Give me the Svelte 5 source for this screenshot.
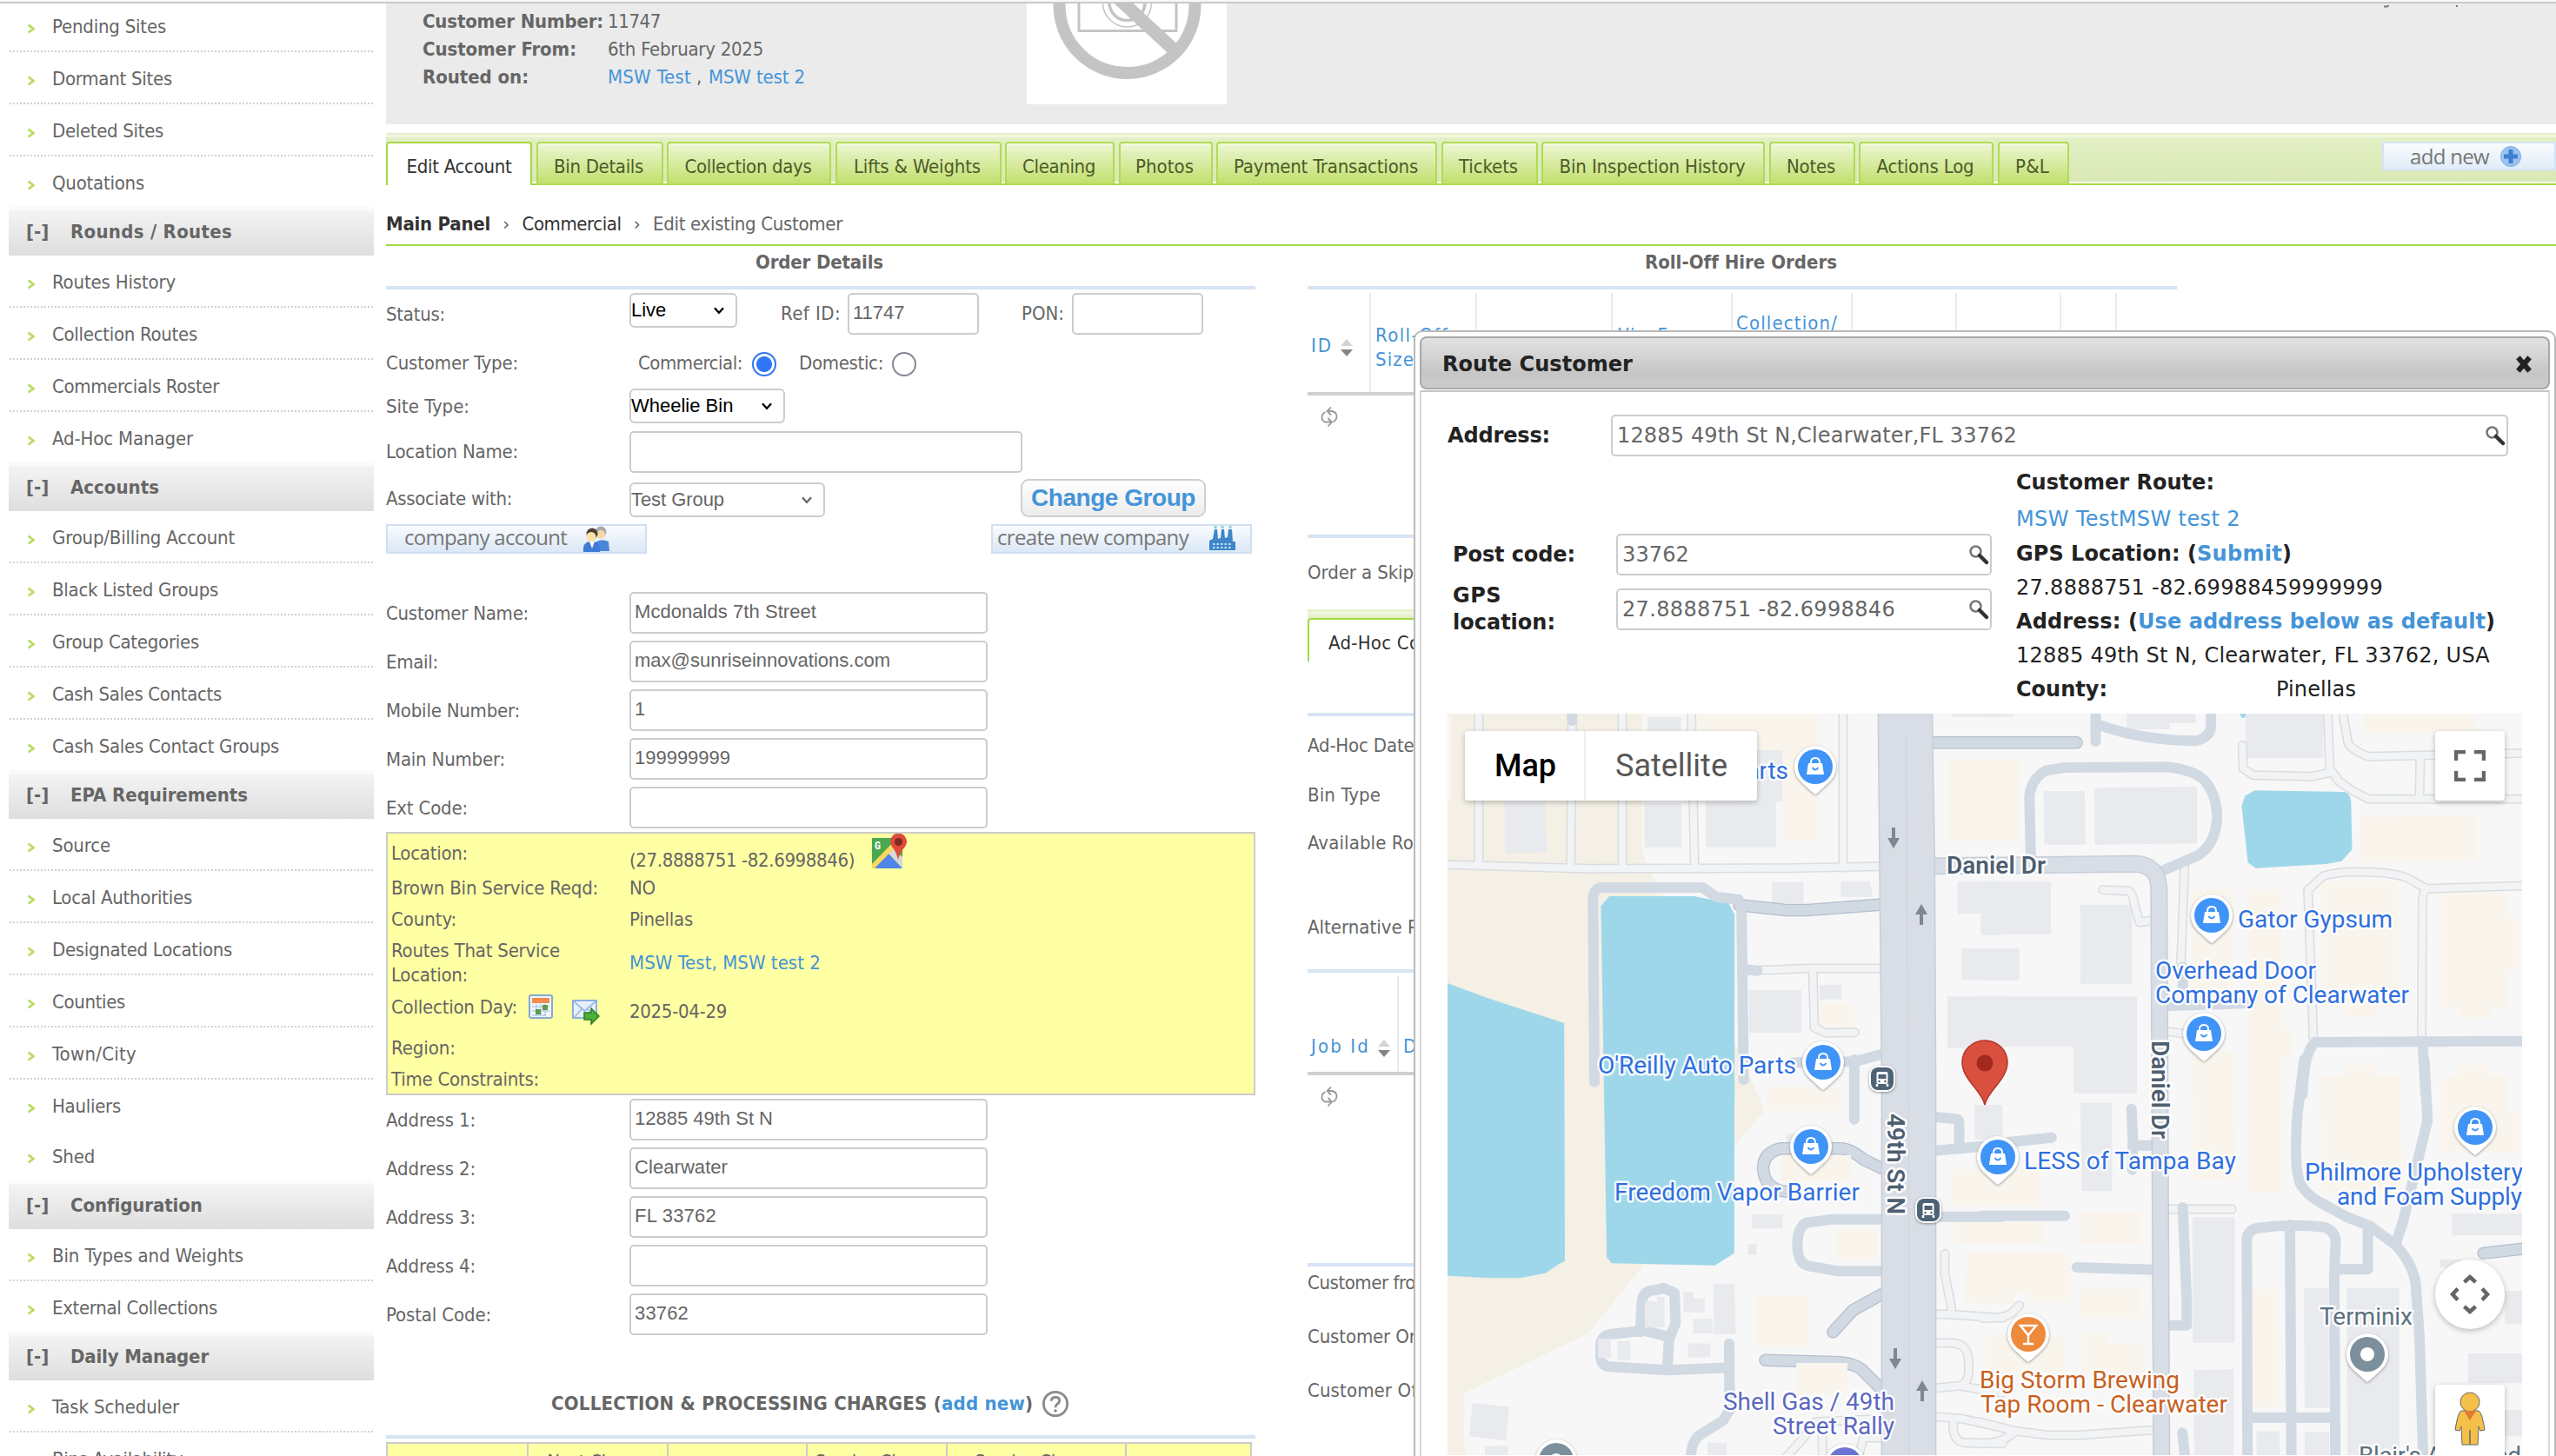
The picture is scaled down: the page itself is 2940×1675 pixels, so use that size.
<script>
  // Tracks a label out (or in) so that it occupies the given width.
  function fit(node, width) {
    if (!width) return;
    const natural = node.getBoundingClientRect().width;
    const n = node.textContent.length;
    node.style.letterSpacing = `${(width - natural) / n}px`;
  }

  const menu = [
    { title: null, items: [['Pending Sites', 131], ['Dormant Sites', 138], ['Deleted Sites', 128], ['Quotations', 106]] },
    { title: ['Rounds / Routes', 186], items: [['Routes History', 142], ['Collection Routes', 167], ['Commercials Roster', 192], ['Ad-Hoc Manager', 162]] },
    { title: ['Accounts', 102], items: [['Group/Billing Account', 210], ['Black Listed Groups', 191], ['Group Categories', 169], ['Cash Sales Contacts', 195], ['Cash Sales Contact Groups', 261]] },
    { title: ['EPA Requirements', 204], items: [['Source', 67], ['Local Authorities', 161], ['Designated Locations', 207], ['Counties', 84], ['Town/City', 97], ['Hauliers', 79, true], ['Shed', 49]] },
    { title: ['Configuration', 151], items: [['Bin Types and Weights', 220], ['External Collections', 190]] },
    { title: ['Daily Manager', 159], items: [['Task Scheduler', 146], ['Bins Availability', 150]] }
  ];

  const tabs = [
    ['Edit Account', 121], ['Bin Details', 103], ['Collection days', 146], ['Lifts & Weights', 146],
    ['Cleaning', 84], ['Photos', 67], ['Payment Transactions', 212], ['Tickets', 68],
    ['Bin Inspection History', 214], ['Notes', 56], ['Actions Log', 112], ['P&L', 39]
  ];

  const contact = [
    ['Customer Name:', 164, 'Mcdonalds 7th Street', 209], ['Email:', 60, 'max@sunriseinnovations.com', 294],
    ['Mobile Number:', 154, '1', 0], ['Main Number:', 137, '199999999', 110], ['Ext Code:', 94, '', 0]
  ];
  const address = [
    ['Address 1:', 103, '12885 49th St N', 159], ['Address 2:', 103, 'Clearwater', 107],
    ['Address 3:', 103, 'FL 33762', 94], ['Address 4:', 103, '', 0], ['Postal Code:', 121, '33762', 62]
  ];

  // Map geometry. Left and right halves have their own coordinate scale; each is split in an upper and a lower part.
  const quads = [
    {
      t: 'translate(1640 810) scale(.41454 .33333)',
      sand: ['M60 36H600V515L630 600L660 665L860 1180L940 1405L856 1530V1900L800 1938H605L450 2175L105 2382V2550L118 2620H60Z'],
      cream: ['M755 36H1088V475H990V340H755Z', 'M60 48H70V335H60Z', 'M1450 192H1600V473H1450Z', 'M1095 1032H1182V1065H1198V1095H1185V1130H1140V1110H1095Z'],
      block: ['M615 48H708V100H615Z', 'M606 345H709V497H606Z', 'M777 338H972V497H777Z', 'M870 162H990V340H870Z', 'M218 330H332L335 515L222 518Z', 'M961 618H1048V690H961Z', 'M1152 614H1232L1240 668H1152Z', 'M897 990H1042V1138H897Z', 'M1093 972H1153V1022H1093Z', 'M1476 614H1600V800H1540V727H1476Z', 'M1486 846H1600V955H1486Z', 'M1447 1012H1600V1190H1447Z', 'M1458 36H1600V47H1458Z'],
      water: ['M60 966L165 1015L384 1104L386 1925L370 1935L332 1967L260 1984H175L60 1976Z', 'M486 700L509 666H745L840 690L857 730L856 1898L802 1940L516 1933L502 1912Z'],
      lane: ['M147 30V560', 'M406 50L402 570', 'M545 30V570', 'M737 30L746 570', 'M1158 30V568', 'M50 557L450 571L1000 569L1260 563', 'M920 922L1060 915H1263', 'M1074 925L1078 1120L1110 1138L1190 1136'],
      trim: ['M870 697L1000 714H1060L1260 695'],
      road: ['M468 1307L464 690Q462 636 490 636H768L805 668L868 678L876 710L882 1300', 'M406 30V60', 'M880 918L920 923', 'M1020 1240L1190 1237L1270 1210', 'M1189 1230V1436'],
      artery: ['M1255 30H1405L1412 535L1415 1300V2600H1265V1300Z'],
      seam: ['M1333 120L1335 700L1340 1400V2600']
    },
    {
      t: 'translate(1640 1240) scale(.41454 .33333)',
      cream: ['M948 32H1150V117H948Z', 'M987 270H1180V360H987Z', 'M1140 527H1255V628H1140Z', 'M915 752H1063V930H915Z', 'M1458 318H1600V447H1458Z', 'M1463 500H1600V572H1463Z', 'M1500 604H1600V780H1495Z', 'M1555 890H1600V1020H1555Z'],
      creamTop: ['M987 270H1180V360H987Z', 'M1028 987H1170V1095H1028Z'],
      block: ['M905 475H990V523H905Z', 'M894 576H918V614H894Z', 'M1000 196H1030V230H1000Z', 'M715 740H742V764H774V812H715Z', 'M797 713H857L860 887H800Z', 'M742 835H796V885H742Z', 'M728 920H790V968H728Z', 'M130 1126L232 1138L222 1255L120 1240Z', 'M164 1273H228V1310H164Z', 'M782 1262H835V1310H782Z', 'M1523 97H1600V215H1523Z'],
      blockTop: ['M608 775H642V758H662V865H608Z', 'M532 912H568V978H532Z', 'M478 903H514V970H478Z'],
      lane: ['M1440 610L1440 680L1458 790V815', 'M1412 818L1462 820L1600 832', 'M1412 918H1460Q1505 920 1506 980Q1512 1060 1480 1066L1412 1074', 'M1480 1066L1600 1090', 'M1412 1172L1490 1180L1600 1210', 'M1465 1180Q1455 1270 1510 1262L1600 1265', 'M1000 1310Q1050 1250 1080 1190L1265 1180', 'M1098 1200L1102 1310', 'M1200 1310L1215 1245H1270'],
      trim: ['M1265 315L1215 285Q1175 245 1150 247H985Q936 260 936 318Q942 390 1000 395', 'M1130 880L1185 805L1265 750', 'M942 977L1150 985Q1190 990 1210 1010L1262 1075'],
      road: ['M1265 491H1130L1055 503Q1031 520 1031 580Q1032 645 1062 652L1145 670H1265', 'M595 880L600 770Q605 735 640 735L658 728L690 745L693 850L675 905L670 1010', 'M675 897L605 875L510 888Q485 895 485 930V970Q488 998 510 1000L672 1012L842 1003', 'M842 920L843 1150L825 1185L755 1240Q736 1265 736 1310', 'M1412 138L1470 145Q1482 145 1480 170V235', 'M1412 254L1560 238', 'M1420 482H1600']
    },
    {
      t: 'translate(2280 810) scale(.42092 .33333)',
      cream: ['M0 192H102V473H0Z', 'M1043 36H1348V104H1043Z', 'M1034 390L1354 384V546L1034 550Z', 'M570 645H685V1040H570Z', 'M728 645H820V1120H846V1222H818V1690H728Z', 'M928 614H1138V1050H1078V1084H995V1050H928Z', 'M1254 655H1435V735H1466V922H1435V1050H1390V1086H1302V1050H1254Z', 'M574 1204H686L690 1647H578Z', 'M925 1284H993V1248H1076V1284H1147V1690H928Z', 'M1254 1289H1300V1248H1385V1284H1435V1412H1466V1550H1254Z'],
      block: ['M395 36H583V68H512V90H395Z', 'M0 36H85V47H0Z', 'M720 36H932V188H720Z', 'M168 303H280L283 488H170Z', 'M306 292L587 288V484L308 488Z', 'M0 614H188V797H0Z', 'M268 695H410V968H268Z', 'M0 846H101V957H0Z', 'M0 1012H423V1347H250V1186H0Z'],
      water: ['M709 355L718 320L745 301L990 306Q1006 312 1008 340L1011 505L982 545L940 555L748 569L726 550Z', 'M704 36H720V48L710 52Z'],
      lane: ['M944 30L950 225L975 270L1010 300L1056 331H1480', 'M985 30L1000 140Q1020 170 1056 184L1480 172', 'M1197 184L1195 330', 'M711 145L713 225L740 248L900 253L955 238', 'M553 560L543 900', 'M330 644L400 648Q412 655 415 690L430 756L465 750', 'M508 1133L560 1142', 'M905 1155L890 645L930 598Q960 582 1030 582Q1150 582 1185 620L1215 640L1480 630', 'M1215 640Q1202 650 1203 700L1201 1160'],
      trim: ['M-130 136H258'],
      road: ['M310 30V132', 'M310 70L350 88Q460 130 585 130Q625 115 625 80V30', 'M133 550L129 320Q135 260 175 232L225 222L505 220Q580 230 610 270Q642 320 642 400Q635 490 590 525L485 583', 'M548 910V985', 'M508 1045L730 1035', 'M1480 1166L910 1170Q880 1200 875 1350', 'M1203 1166L1212 1350'],
      street: ['M-128 562L420 554Q480 558 483 640L490 2600']
    },
    {
      t: 'translate(2280 1240) scale(.42092 .33333)',
      cream: ['M0 318H160V444H0Z', 'M0 502H172V572H0Z', 'M0 604H240V777H127V743H88V782H0Z', 'M268 469H436V576H268Z', 'M266 730H436V833H266Z', 'M272 885H344V918H440V1022H272Z', 'M10 892H230V1020H10Z', 'M740 732H808L812 1140H740Z'],
      block: ['M0 97H38V215H0Z', 'M268 89H355V394H272Z', 'M574 484H690V917H576Z', 'M578 1012L687 1008V1310H580Z', 'M879 728H947V1142H881Z', 'M996 728H1140V1310H998Z', 'M1284 472H1480V547H1284Z', 'M1250 630H1310V656H1250Z', 'M1428 738H1480V853H1428Z', 'M1328 954H1480V1056H1328Z', 'M1350 1150H1480V1240H1350Z', 'M749 1223H813V1310H750Z', 'M881 1225H948V1310H882Z'],
      lane: ['M0 832Q60 835 80 815L102 788', 'M-10 1190L90 1222L180 1236H265L470 1218', 'M90 1222Q60 1265 -10 1265', 'M510 456H682'],
      trim: ['M1500 590L1370 608'],
      road: ['M70 225L190 209', 'M408 110L412 225L410 320', 'M412 236H475', 'M0 479H226', 'M258 657L470 665', 'M548 450L559 770V857H510', 'M880 -60L862 120Q850 320 870 370Q890 410 920 430L1000 485L1060 515L1130 580Q1180 650 1185 720L1195 900L1205 1310', 'M1208 -60L1217 150L1165 420L1150 500L1130 575', 'M725 1310L723 560Q725 530 750 522Q840 505 935 518Q965 530 966 570L962 680L965 1310', 'M841 510L845 1310', 'M1054 520V664H965', 'M725 1175H960', 'M547 1228L554 1310']
    }
  ];
  const layers = [
    ['sand', 'sand'], ['water', 'water'], ['cream', 'cream'], ['block', 'block'],
    ['lane', 'lane-edge'], ['lane', 'lane'], ['trim', 'trim-edge'], ['trim', 'road'], ['road', 'road'],
    ['creamTop', 'cream'], ['blockTop', 'block'],
    ['artery', 'artery'], ['seam', 'seam'], ['street', 'street-edge'], ['street', 'street']
  ];

  const shops = [[2088, 883], [2097, 1223], [2083, 1320], [2298, 1332], [2544, 1054], [2535, 1190], [2847, 1298]];
  const places = [
    ['Parts', 1991, 897, 66, 'shop'], ["O'Reilly Auto Parts", 1838, 1236, 228, 'shop'], ['Freedom Vapor Barrier', 1857, 1382, 282, 'shop'],
    ['LESS of Tampa Bay', 2328, 1346, 244, 'shop'], ['Gator Gypsum', 2574, 1068, 178, 'shop'],
    ['Overhead Door', 2479, 1127, 185, 'shop'], ['Company of Clearwater', 2479, 1155, 292, 'shop'],
    ['Philmore Upholstery', 2651, 1359, 251, 'shop'], ['and Foam Supply', 2688, 1387, 213, 'shop'],
    ['Terminix', 2668, 1525, 107, 'firm'], ["Blair's Auto and", 2713, 1685, 187, 'firm'],
    ['Big Storm Brewing', 2277, 1598, 230, 'food'], ['Tap Room - Clearwater', 2278, 1626, 284, 'food'],
    ['Shell Gas / 49th', 1982, 1623, 197, 'fuel'], ['Street Rally', 2039, 1651, 140, 'fuel']
  ];
  const buses = [[2165, 1242], [2218, 1393]];
  const arrows = [[2178, 965, 0], [2210, 1053, 180], [2180, 1564, 0], [2211, 1601, 180]];
</script>

{#snippet t(text, w, cls = '')}<span class="t {cls}" use:fit={w}>{text}</span>{/snippet}

{#snippet chevron()}<svg class="chev" viewBox="0 0 16 16"><path d="M3.5 5.5L8 10.5L12.5 5.5" /></svg>{/snippet}

{#snippet lens()}<svg class="lens" viewBox="0 0 24 24"><circle cx="8.5" cy="8.500" r="6" fill="#fff" stroke="#777" stroke-width="2.500" /><path d="M13 13L21 21" stroke="#333" stroke-width="4.500" stroke-linecap="round" /></svg>{/snippet}

{#snippet refresh()}<svg class="refresh" viewBox="0 0 20 24"><path d="M12 .500L7.500 5L12 9.500M7.500 5H13Q18.500 6 18.500 11Q18.500 15 14.500 17.500M8.500 13L13 17.500L8.500 22.500M13 17.500H5Q1.500 16 1.500 12Q1.500 8 5.500 6" /></svg>{/snippet}

{#snippet sorter()}<svg class="sorter" viewBox="0 0 16 20"><path d="M8 0L15 8H1Z" fill="#d3d3d3" /><path d="M8 20L15 12H1Z" fill="#848484" /></svg>{/snippet}

{#snippet field(row)}
  <div class="row">
    <div class="label">{@render t(row[0], row[1])}</div>
    <div class="input wide">{#if row[2]}{@render t(row[2], row[3])}{/if}</div>
  </div>
{/snippet}

<div class="page">
  <nav class="sidebar">
    {#each menu as group}
      {#if group.title}
        <div class="group"><span class="toggle">[-]</span>{@render t(group.title[0], group.title[1])}</div>
      {/if}
      {#each group.items as item, i}
        <div class="item" class:plain={i === group.items.length - 1 || item[2]}>
          <svg class="bullet" viewBox="0 0 8 12"><path d="M.500 1.500L6.500 6L.500 10.500" /></svg>{@render t(item[0], item[1])}
        </div>
      {/each}
    {/each}
  </nav>

  <main>
    <header>
      <dl>
        <dt>{@render t('Customer Number:', 208)}</dt><dd>{@render t('11747', 61)}</dd>
        <dt>{@render t('Customer From:', 177)}</dt><dd>{@render t('6th February 2025', 179)}</dd>
        <dt>{@render t('Routed on:', 122)}</dt>
        <dd>{@render t('MSW Test', 96, 'link')}<span class="comma">,</span>{@render t('MSW test 2', 111, 'link')}</dd>
      </dl>
      <svg class="nophoto" viewBox="0 0 230 116">
        <rect width="230" height="116" fill="#fff" />
        <g fill="none" stroke="#c4c4c4">
          <path d="M60 -10V31.500H172V-10" stroke-width="3" />
          <circle cx="115.500" cy="-1" r="28" stroke-width="1.500" />
          <circle cx="115.500" cy="-1" r="20.500" stroke-width="3.500" />
          <path d="M103 -8L170 54" stroke-width="15" />
          <circle cx="115.500" cy="2" r="78" stroke-width="14" />
        </g>
      </svg>
      <svg class="tails" viewBox="0 0 90 4"><path d="M2 1.500H6L8 -1M86 0V2" /></svg>
    </header>

    <div class="tabbar">
      <div class="tabs">
        {#each tabs as tab, i}
          <div class="tab" class:active={i === 0}>{@render t(tab[0], tab[1])}</div>
        {/each}
      </div>
      <div class="addnew">
        {@render t('add new', 91)}
        <svg viewBox="0 0 26 26"><circle cx="13" cy="13" r="11.500" fill="#9cc4ef" stroke="#77abe6" /><path d="M13 5V21M5 13H21" stroke="#3f7fd0" stroke-width="5" /></svg>
      </div>
    </div>

    <div class="crumbs">
      <b>{@render t('Main Panel', 120)}</b><i>›</i>{@render t('Commercial', 114, 'dark')}<i>›</i>{@render t('Edit existing Customer', 218)}
    </div>

    <div class="columns">
      <section class="order">
        <h2>{@render t('Order Details', 147)}</h2>
        <div class="row status">
          <div class="label">{@render t('Status:', 68)}</div>
          <div class="select s1">Live{@render chevron()}</div>
          <div class="side ref">{@render t('Ref ID:', 69)}</div>
          <div class="input short"><span>11747</span></div>
          <div class="side pon">{@render t('PON:', 49)}</div>
          <div class="input short"></div>
        </div>
        <div class="row type">
          <div class="label">{@render t('Customer Type:', 152)}</div>
          <span class="c1">{@render t('Commercial:', 120)}</span><span class="radio on"></span>
          <span class="c2">{@render t('Domestic:', 97)}</span><span class="radio"></span>
        </div>
        <div class="row site">
          <div class="label">{@render t('Site Type:', 96)}</div>
          <div class="select s2">Wheelie Bin{@render chevron()}</div>
        </div>
        <div class="row loc">
          <div class="label">{@render t('Location Name:', 152)}</div>
          <div class="input long"></div>
        </div>
        <div class="row assoc">
          <div class="label">{@render t('Associate with:', 145)}</div>
          <div class="select s3">{@render t('Test Group', 107)}{@render chevron()}</div>
          <div class="change">{@render t('Change Group', 189)}</div>
        </div>
        <div class="company">
          <div class="cbtn first">
            {@render t('company account', 187)}
            <svg viewBox="0 0 32 32"><circle cx="21" cy="8" r="6.500" fill="#aaa" /><circle cx="21" cy="11" r="5" fill="#f6d9a8" /><path d="M15 30V20Q21 15 30 19L31 30Z" fill="#4c86dc" /><circle cx="11" cy="10" r="6.500" fill="#4a4036" /><circle cx="10" cy="13.500" r="5.500" fill="#f9dfa9" /><path d="M1 31Q0 20 8 19H14Q21 21 20 31Z" fill="#3f7ad6" /><path d="M8 19H14L11 27Z" fill="#fff" /></svg>
          </div>
          <div class="cbtn second">
            {@render t('create new company', 220)}
            <svg viewBox="0 0 32 32"><path d="M1 29V18L5 16L7 5H10L11 16L14 15L15 5H18L19 15L22 14L23 5H27L28 19H31V29Z" fill="#3e86c9" /><path d="M5 22H26M5 26H26" stroke="#bfe0f5" stroke-width="2" stroke-dasharray="2.500 2" /><path d="M8 4V1M16 4V1M25 4V1" stroke="#8fd0d5" stroke-width="3" /></svg>
          </div>
        </div>
        {#each contact as row}{@render field(row)}{/each}

        <div class="notice">
          <div class="n n1"><div>{@render t('Location:', 88)}</div><div class="low">{@render t('(27.8888751 -82.6998846)', 259)}
            <svg class="gmap" viewBox="0 0 40 40"><rect x="0" y="5" width="35" height="35" fill="#4aa851" /><path d="M1 40L18 22L35 40Z" fill="#5184ec" /><path d="M18 22L24 16L35 27V40Z" fill="#d8d8d8" /><path d="M0 35L28 6L33 9L3 40H0Z" fill="#fbd75b" /><path d="M30 30Q28 21 23 15A9.500 9.500 0 1 1 38 15Q32 22 30 30Z" fill="#de4b3b" /><circle cx="30.500" cy="9.500" r="4.500" fill="#7c2a22" /><text x="3" y="18" font-size="12" font-weight="700" fill="#fff" font-family="Roboto">G</text></svg></div></div>
          <div class="n"><div>{@render t('Brown Bin Service Reqd:', 238)}</div><div>{@render t('NO', 30)}</div></div>
          <div class="n"><div>{@render t('County:', 75)}</div><div>{@render t('Pinellas', 73)}</div></div>
          <div class="n n4"><div>{@render t('Routes That Service', 194)}<br />{@render t('Location:', 88)}</div><div>{@render t('MSW Test, MSW test 2', 220, 'link')}</div></div>
          <div class="n n5"><div class="icons">{@render t('Collection Day:', 145)}
            <svg class="cal" viewBox="0 0 28 28"><rect x="1" y="1" width="26" height="26" rx="2" fill="#f2f7fd" stroke="#86a8d4" stroke-width="2" /><rect x="4" y="4" width="20" height="6" fill="#f08c4c" /><path d="M4 14H24M4 19H24M4 24H20M9 11V25M14 11V25M19 11V25" stroke="#b9cbe4" stroke-width="1.500" /><rect x="16" y="12" width="6" height="6" fill="#5a9c4c" /><rect x="8" y="17" width="6" height="6" fill="#5a9c4c" /></svg>
            <svg class="mail" viewBox="0 0 32 30"><rect x="1" y="1" width="27" height="20" fill="#e6f0fc" stroke="#8db0dd" stroke-width="2" /><path d="M2 2L14.500 13L27 2M2 21L11 11M27 21L18 11" fill="none" stroke="#9dbbe2" stroke-width="1.800" /><path d="M14 15H22V10L31 19L22 28V23H14Z" fill="#4caf3a" stroke="#2e7d22" stroke-width="1.500" /></svg></div><div class="date">{@render t('2025-04-29', 112)}</div></div>
          <div class="n"><div>{@render t('Region:', 74)}</div></div>
          <div class="n"><div>{@render t('Time Constraints:', 170)}</div></div>
        </div>

        {#each address as row}{@render field(row)}{/each}

        <div class="charges">
          {@render t('COLLECTION & PROCESSING CHARGES (', 449)}{@render t('add new', 96, 'link')}<span>)</span>
          <svg viewBox="0 0 34 34"><circle cx="17" cy="17" r="14.500" fill="none" stroke="#8b8b8b" stroke-width="3" /><path d="M12 13.500Q12 9 17 9Q22 9 22 13Q22 15.500 19 17.500Q17 19 17 21.500" fill="none" stroke="#8b8b8b" stroke-width="3" /><circle cx="17" cy="25.500" r="1.900" fill="#8b8b8b" /></svg>
        </div>
        <div class="table"><span></span><span>Next Charge</span><span></span><span>Service Charge</span><span>Service Charge</span><span></span></div>
      </section>

      <section class="hire">
        <h2>{@render t('Roll-Off Hire Orders', 220)}</h2>
        <div class="heads">
          <div class="hid">{@render t('ID', 25)}{@render sorter()}</div>
          <div class="h2l">{@render t('Roll-Off', 84)}<br />{@render t('Size', 45)}</div>
          <div></div><div class="h4">Hire From</div><div class="h5">{@render t('Collection/', 117)}</div>
          <div></div><div></div><div></div><div></div>
        </div>
        <div class="empty e1">{@render refresh()}</div>
        <div class="line l1">{@render t('Order a Skip', 122)}</div>
        <div class="subtab"><div>{@render t('Ad-Hoc Collections', 190)}</div></div>
        <div class="adhoc">
          <p class="a1">{@render t('Ad-Hoc Date:', 129)}</p>
          <p class="a2">{@render t('Bin Type', 84)}</p>
          <p class="a3">{@render t('Available Routes:', 172)}</p>
          <p class="a4">{@render t('Alternative Route:', 179)}</p>
        </div>
        <div class="jobs"><div>{@render t('Job Id', 68)}{@render sorter()}</div><div>Date</div></div>
        <div class="empty e2">{@render refresh()}</div>
        <div class="from">
          <p>{@render t('Customer from:', 149)}</p><p>{@render t('Customer Order:', 163)}</p><p>{@render t('Customer Offer:', 160)}</p>
        </div>
      </section>
    </div>
  </main>

  <div class="modal">
    <div class="title">{@render t('Route Customer', 219)}
      <svg viewBox="0 0 20 20"><path d="M4 3L16 17M16 3L4 17" stroke="#222" stroke-width="5.500" /></svg></div>
    <div class="body">
      <div class="addr"><b>{@render t('Address:', 118)}</b><div class="input minput">{@render t('12885 49th St N,Clearwater,FL 33762', 460)}{@render lens()}</div></div>
      <div class="info">
        <div class="codes">
          <div class="code"><b>{@render t('Post code:', 141)}</b><div class="input minput">{@render t('33762', 77)}{@render lens()}</div></div>
          <div class="code"><b>{@render t('GPS', 56)}<br />{@render t('location:', 118)}</b><div class="input minput">{@render t('27.8888751 -82.6998846', 314)}{@render lens()}</div></div>
        </div>
        <div class="route">
          <p class="r1"><b>{@render t('Customer Route:', 228)}</b></p>
          <p class="r2">{@render t('MSW TestMSW test 2', 258, 'link')}</p>
          <p><b>{@render t('GPS Location: (', 208)}{@render t('Submit', 98, 'link')}<span>)</span></b></p>
          <p>{@render t('27.8888751 -82.69988459999999', 422)}</p>
          <p><b>{@render t('Address: (', 140)}{@render t('Use address below as default', 400, 'link')}<span>)</span></b></p>
          <p>{@render t('12885 49th St N, Clearwater, FL 33762, USA', 545)}</p>
          <p class="county"><b>{@render t('County:', 105)}</b>{@render t('Pinellas', 92)}</p>
        </div>
      </div>
      <div class="map">
        <svg class="canvas" viewBox="1665 822 1236 853">
          <rect x="1665" y="822" width="1236" height="853" fill="#f7f7f7" />
          {#each layers as [key, cls]}
            {#each quads as q}
              <g transform={q.t}>{#each q[key] ?? [] as d}<path class={cls} {d} />{/each}</g>
            {/each}
          {/each}

          {#each arrows as [x, y, a]}
            <path d="M-2 -12H2V0H7L0 12L-7 0H-2Z" fill="#7f8791" transform="translate({x} {y}) rotate({a})" />
          {/each}

          <text class="street-name" x="2239" y="1006" textLength="114">Daniel Dr</text>
          <text class="street-name" transform="translate(2171 1282) rotate(90)" textLength="116">49th St N</text>
          <text class="street-name" transform="translate(2475 1198) rotate(90)" textLength="113">Daniel Dr</text>

          {#each places as [name, x, y, w, kind]}
            <text class="place {kind}" {x} {y} textLength={w}>{name}</text>
          {/each}

          {#snippet pin(x, y, color)}
            <path class="pin" d="M{x} {y + 32}L{x - 4} {y + 29}L{x - 16} {y + 18}A24 24 0 1 1 {x + 16} {y + 18}L{x + 4} {y + 29}Z" />
            <circle cx={x} cy={y} r="20" fill={color} />
          {/snippet}

          {#each shops as [x, y]}
            {@render pin(x, y, '#4094f7')}
            <path d="M{x - 8} {y - 4}H{x + 8}L{x + 10} {y + 9}H{x - 10}Z" fill="#fff" />
            <path d="M{x - 5} {y - 3}V{y - 5}Q{x - 5} {y - 10} {x} {y - 10}Q{x + 5} {y - 10} {x + 5} {y - 5}V{y - 3}" fill="none" stroke="#fff" stroke-width="2" />
            <path d="M{x - 3.500} {y + 1}Q{x} {y + 6} {x + 3.500} {y + 1}" fill="none" stroke="#4094f7" stroke-width="2" />
          {/each}
          {@render pin(2333, 1536, '#ee8a3c')}
          <path d="M2324 1526H2342L2333 1537ZM2333 1536V1547M2327 1547H2339" fill="none" stroke="#fff" stroke-width="2.500" />
          {@render pin(2723, 1559, '#7b909c')}
          <circle cx="2723" cy="1559" r="8" fill="#fff" />
          {@render pin(1790, 1681, '#7b909c')}
          <circle cx="1790" cy="1681" r="8" fill="#fff" />
          {@render pin(2122, 1686, '#6b75d1')}

          {#each buses as [x, y]}
            <g transform="translate({x} {y})">
              <rect class="pin" x="-15" y="-15" width="30" height="30" rx="10" />
              <rect x="-13" y="-13" width="26" height="26" rx="8" fill="#4f6376" />
              <rect x="-6.500" y="-8" width="13" height="14" rx="2" fill="#fff" />
              <rect x="-4.500" y="-5" width="9" height="5" fill="#4f6376" />
              <circle cx="-3.500" cy="3" r="1.200" fill="#4f6376" /><circle cx="3.500" cy="3" r="1.200" fill="#4f6376" />
              <path d="M-6 6V9M6 6V9" stroke="#fff" stroke-width="2.500" />
            </g>
          {/each}

          <path d="M2283 1272C2280 1256 2257 1243 2257 1223A26 25 0 0 1 2309 1223C2309 1243 2286 1256 2283 1272Z" fill="#d9503f" stroke="#b5332a" stroke-width="1.500" />
          <circle cx="2283" cy="1224" r="9.500" fill="#a32820" />
        </svg>

        <div class="maptype"><b>{@render t('Map', 71)}</b><span>{@render t('Satellite', 129)}</span></div>
        <div class="control full"><svg viewBox="0 0 36 36"><path d="M2 12V2H13M23 2H34V12M34 24V34H23M13 34H2V24" /></svg></div>
        <div class="control pan"><svg viewBox="0 0 48 48"><path d="M17.500 10L24 4L30.500 10M17.500 38L24 44L30.500 38M10 17.500L4 24L10 30.500M38 17.500L44 24L38 30.500" /></svg></div>
        <div class="control man"><svg viewBox="0 0 36 62"><path d="M8 22H28Q32 24 35 44L30 45L28 40L27 61H9L8 40L6 45L1 44Q4 24 8 22Z" fill="#f5c04a" stroke="#666" /><path d="M18 44V61" stroke="#666" stroke-width="1.500" /><circle cx="18" cy="12" r="11" fill="#f5c04a" stroke="#666" /><path d="M11 22H25L18 33Z" fill="#dd7c34" /></svg></div>
      </div>
    </div>
  </div>
</div>

<style>
  :global(body) { background: #fff; }
  .page {
    position: relative; width: 2940px; height: 1675px; overflow: hidden; display: grid;
    grid-template-columns: 444px 1fr; background: #fff; color: #666;
    font: 22px/28px "DejaVu Sans Condensed", "DejaVu Sans", sans-serif; font-stretch: condensed;
  }
  .page::before { content: ""; position: absolute; inset: 0 0 auto; height: 4px; background: #f8f8f9; border-bottom: 2px solid #c9c9cb; box-sizing: border-box; }
  .t { display: inline-block; white-space: nowrap; }
  .link { color: #4494d8; }
  p, h2, dl, dd { margin: 0; }

  .sidebar { padding: 0 14px 0 10px; overflow: hidden; height: 1675px; }
  .item { height: 60px; box-sizing: border-box; display: flex; align-items: center; padding: 4px 0 2px 22px; background: repeating-linear-gradient(90deg, #d2d2d2 0 2px, transparent 2px 4px) 1px 100% / 418px 2px no-repeat; }
  .item.plain { height: 58px; background: none; padding-top: 4px; padding-bottom: 0; }
  .bullet { width: 8px; height: 12px; margin-right: 20px; position: relative; top: 2px; }
  .bullet path { fill: none; stroke: #b9dc63; stroke-width: 2.800; }
  .group { height: 56px; box-sizing: border-box; padding: 2px 0 0 20px; display: flex; align-items: center; font-weight: 700; background: linear-gradient(#fafafa 0 4px, #f3f3f3 5px, #dedede); }
  .toggle { width: 51px; }

  main { min-width: 0; height: 1675px; overflow: hidden; padding-top: 4px; box-sizing: border-box; }
  header { height: 139px; background: #ebebeb; display: flex; }
  dl { display: grid; grid-template-columns: 213px 482px; grid-auto-rows: 32px; line-height: 32px; margin-left: 42px; padding-top: 5px; }
  dt { font-weight: 700; }
  dd { display: flex; }
  .comma { width: 20px; padding-left: 6px; box-sizing: border-box; }
  .nophoto { width: 230px; height: 116px; }
  .tails { width: 90px; height: 4px; margin: 2px 110px 0 auto; }
  .tails path { fill: none; stroke: #777; stroke-width: 2; }

  .tabbar { margin-top: 10px; height: 60px; box-sizing: border-box; display: flex; justify-content: space-between; background: linear-gradient(#e2eec4 0 1px, #edf6d9 2px, #f2f8e4 4px, #e3f0c4 6px, #d9e8b4 56px, #f5faea 56px 58px, #a5d847 58px); padding-top: 10px; }
  .tabs { display: grid; grid-template-columns: 168px 146px 189px 191px 126px 108px 254px 111px 257px 99px 155px 82px; column-gap: 4.500px; }
  .tab { height: 50px; box-sizing: border-box; border: 2px solid #b0db55; border-radius: 4px 4px 0 0; text-align: center; line-height: 54px; padding-right: 2px; color: #4c5c28; background: linear-gradient(#ecf6d3, #c2df6e); box-shadow: inset 0 2px #f2f9e0; }
  .tab.active { background: #fff; border-bottom: 0; border-color: #a5d847; color: #333; box-shadow: none; padding-right: 0; }
  .addnew { width: 200px; height: 33px; box-sizing: border-box; border: 2px solid #d4e4f5; background: linear-gradient(#f9fcfe, #e0ecf8); display: flex; align-items: center; padding-left: 30px; gap: 12px; font: 24px/30px "Open Sans", sans-serif; color: #777; }
  .addnew svg { width: 26px; height: 26px; }

  .crumbs { height: 70px; box-sizing: border-box; border-bottom: 2px solid #a5d84a; display: flex; align-items: center; padding-top: 22px; }
  .crumbs b, .dark { color: #333; }
  .crumbs i { font-style: normal; width: 36.500px; text-align: center; }

  .columns { display: grid; grid-template-columns: 1000px 1000px; column-gap: 60px; }
  h2 { font-size: 22px; font-weight: 700; text-align: center; height: 50px; box-sizing: border-box; line-height: 38px; border-bottom: 4px solid #d6e4f3; padding-right: 3px; }

  .row { height: 56px; display: flex; align-items: center; }
  .label { width: 280px; flex: none; padding-top: 2px; }
  .input { height: 48px; box-sizing: border-box; border: 2px solid #ccc; border-radius: 5px; background: #fff; line-height: 42px; padding-left: 4px; font-family: "Liberation Sans", sans-serif; }
  .wide { width: 412px; }
  .short { width: 151px; flex: none; }
  .long { width: 452px; }
  .select { height: 40px; box-sizing: border-box; border: 2px solid #ccc; border-radius: 6px; background: #fff; color: #000; font-family: "Liberation Sans", sans-serif; display: flex; align-items: center; justify-content: space-between; padding-right: 10px; flex: none; }
  .chev { width: 18px; height: 18px; }
  .chev path { fill: none; stroke: currentColor; stroke-width: 2; }
  .status .select { margin-bottom: 8px; }
  .s1 { width: 124px; } .s2 { width: 179px; } .s3 { width: 225px; color: #666; }
  .side { flex: none; }
  .ref { width: 77px; margin-left: 50px; }
  .pon { width: 58px; margin-left: 49px; }
  .c1 { margin-left: 10px; width: 131px; padding-top: 2px; }
  .c2 { margin-left: 26px; width: 107px; padding-top: 2px; }
  .radio { width: 28px; height: 28px; box-sizing: border-box; border: 2px solid #888694; border-radius: 50%; margin-top: 4px; }
  .radio.on { border: 2px solid #2f76f6; background: radial-gradient(circle, #2f76f6 8.500px, #fff 9.500px); }
  .site { height: 48px; }
  .site .label { padding-top: 0; margin-top: -3px; }
  .site .select { margin-top: -4px; }
  .loc { height: 54px; }
  .loc .label { padding-top: 0; }
  .assoc .label { padding-top: 0; margin-top: -2px; }
  .change { width: 213px; height: 44px; margin-left: 225px; margin-top: -4px; box-sizing: border-box; border: 2px solid #d0d0d0; border-radius: 9px; text-align: center; font: 700 28px/40px "Liberation Sans", sans-serif; color: #4494d8; background: linear-gradient(#fff, #ececec); }
  .company { display: flex; justify-content: space-between; padding-right: 4px; margin-bottom: 40px; }
  .cbtn { width: 300px; height: 34px; box-sizing: border-box; border: 2px solid #d0e0f2; background: linear-gradient(#fafcff, #e6eff8 60%, #dbe8f6); display: flex; align-items: center; gap: 18px; font: 24px/26px "Open Sans", sans-serif; color: #777; }
  .cbtn .t { position: relative; top: -2px; }
  .cbtn svg { width: 32px; height: 32px; }
  .first { padding-left: 19px; }
  .second { padding-left: 5px; gap: 23px; }

  .notice { height: 303px; box-sizing: border-box; border: 2px solid #ccc; background: #ffffa3; padding: 5px 4px 0; display: flex; flex-direction: column; }
  .n { display: grid; grid-template-columns: 274px 1fr; height: 36px; line-height: 36px; }
  .n1 { height: 40px; }
  .low { display: flex; gap: 20px; padding-top: 8px; height: 32px; }
  .gmap { width: 40px; height: 40px; margin-top: -13px; }
  .n4 { height: 64px; line-height: 28px; align-items: center; }
  .n5 { height: 46px; line-height: 38px; }
  .icons { display: flex; }
  .cal { width: 28px; height: 28px; margin: 4px 0 0 13px; }
  .mail { width: 32px; height: 30px; margin: 10px 0 0 22px; }
  .date { padding-top: 5px; }
  .n:nth-child(n+6) { position: relative; top: 2px; }

  .charges { height: 115px; box-sizing: border-box; border-bottom: 4px solid #d6e4f3; display: flex; align-items: center; padding: 39px 0 0 190px; font-weight: 700; }
  .charges svg { width: 32px; height: 32px; margin-left: 10px; }
  .table { margin-top: 4px; width: 996px; display: grid; grid-template-columns: 160px 161px 160px 161px 206px 1fr; background: #ffffa3; border: 2px solid #ccc; box-sizing: border-box; height: 60px; }
  .table span { border-left: 2px solid #ccc; text-align: center; padding-top: 7px; letter-spacing: -.600px; }
  .table span:first-child { border: 0; }

  .hire h2 { width: 1000px; padding-left: 0; }
  .heads { display: grid; grid-template-columns: 71px 122px 156px 138px 138px 120px 120px 64px 1fr; height: 122px; box-sizing: border-box; border-bottom: 4px solid #d0d0d0; padding-top: 4px; color: #4494d8; }
  .heads div + div { border-left: 2px solid #eaeaea; padding-left: 5px; }
  .heads .hid { padding: 47px 0 0 4px; white-space: nowrap; }
  .heads .h2l { padding-top: 35px; }
  .heads .h4 { padding-top: 35px; }
  .heads .h5 { padding-top: 21px; padding-left: 4px; }
  .sorter { width: 16px; height: 20px; margin-left: 8px; vertical-align: -5px; }
  .refresh { width: 20px; height: 24px; }
  .refresh path { fill: none; stroke: #999; stroke-width: 1.800; }
  .empty { box-sizing: border-box; border-bottom: 4px solid #d6e4f3; padding: 13px 0 0 15px; }
  .e1 { height: 164px; }
  .e2 { height: 220px; }
  .line { height: 82px; padding-top: 26px; box-sizing: border-box; }
  .subtab { height: 123px; box-sizing: border-box; border-bottom: 4px solid #d6e4f3; background: linear-gradient(#e3f0c4, #f0f7e0 4px, #dfedbc 10px, transparent 10px); padding-top: 10px; }
  .subtab div { border-top: 2px solid #a5d847; border-left: 2px solid #a5d847; border-radius: 4px 0 0 0; height: 50px; padding: 13px 0 0 22px; box-sizing: border-box; color: #333; background: #fff; }
  .adhoc { height: 295px; box-sizing: border-box; border-bottom: 4px solid #d6e4f3; padding-top: 20px; }
  .a1 { height: 57px; } .a2 { height: 55px; } .a3 { height: 97px; }
  .jobs { height: 118px; box-sizing: border-box; border-bottom: 4px solid #d0d0d0; display: grid; grid-template-columns: 103px 1fr; color: #4494d8; padding-top: 4px; }
  .jobs div { padding: 67px 0 0 4px; white-space: nowrap; }
  .jobs div + div { border-left: 2px solid #eaeaea; padding-left: 5px; }
  .from { padding-top: 5px; }
  .from p { height: 62px; }

  .modal { position: absolute; left: 1626px; top: 380px; width: 1314px; height: 1320px; box-sizing: border-box; border: 2px solid #b9b9b9; border-radius: 10px 10px 0 0; background: #fff; padding: 5px 5px 0; color: #222; font: 24px/38px "DejaVu Sans", sans-serif; font-stretch: normal; }
  .title { height: 61px; box-sizing: border-box; border: 2px solid #a8a8a8; border-radius: 8px; background: linear-gradient(#e2e2e2, #c6c6c6 70%, #cbcbcb); font-weight: 700; line-height: 60px; padding: 2px 17px 0 24px; display: flex; justify-content: space-between; align-items: center; }
  .title svg { width: 22px; height: 22px; }
  .body { border: 2px solid #d8d8d8; border-top-color: #c4c4c4; margin-top: 1px; height: 1260px; padding: 26px 30px 0; }
  .minput { font: 24px/44px "DejaVu Sans", sans-serif; color: #666; display: flex; justify-content: space-between; align-items: center; padding-left: 5px; flex: none; }
  .lens { width: 24px; height: 24px; margin-right: 1px; }
  .addr { display: flex; align-items: center; }
  .addr b { width: 188px; }
  .addr .minput { width: 1032px; }
  .info { display: grid; grid-template-columns: 654px 1fr; height: 296px; }
  .codes { padding: 89px 0 0 6px; display: flex; flex-direction: column; gap: 15px; }
  .code { display: flex; align-items: center; height: 48px; line-height: 31px; }
  .code b { width: 188px; flex: none; }
  .code .minput { width: 432px; }
  .code .t { vertical-align: top; }
  .route { padding-top: 9px; white-space: nowrap; }
  .route p { height: 39px; line-height: 39px; }
  .route .r1 { height: 43px; line-height: 43px; }
  .route .r2 { height: 41px; line-height: 41px; }
  .county b { display: inline-block; width: 299px; }

  .map { position: relative; width: 1236px; height: 853px; overflow: hidden; }
  .canvas { display: block; width: 1236px; height: 853px; }
  .canvas path { vector-effect: non-scaling-stroke; }
  .sand { fill: #f4f0e5; }
  .water { fill: #9fd7ea; }
  .cream { fill: #f9f5ed; }
  .block { fill: #e8eaee; }
  .lane-edge, .lane, .trim-edge, .road, .street, .street-edge, .seam { fill: none; stroke-linecap: round; stroke-linejoin: round; }
  .lane-edge { stroke: #dadcdf; stroke-width: 11px; }
  .lane { stroke: #f1f3f4; stroke-width: 8px; }
  .trim-edge { stroke: #b4bfcd; stroke-width: 14.500px; }
  .road { stroke: #d1d9e3; stroke-width: 12px; }
  .artery { fill: #d9dde5; stroke: #c6ced9; stroke-width: 1.500px; }
  .seam { stroke: #cfd4dd; stroke-width: 1.200px; }
  .street-edge, .street { stroke-linecap: butt; }
  .street-edge { stroke: #c6ced9; stroke-width: 20px; }
  .street { stroke: #d9dde5; stroke-width: 17px; }
  .street-name, .place { font: 600 28px Roboto, sans-serif; paint-order: stroke; stroke: #fff; stroke-width: 5px; stroke-linejoin: round; fill: #4e5f71; }
  .place { font-weight: 400; stroke-opacity: .9; }
  .shop { fill: #2f6fe0; } .firm { fill: #5b7280; } .food { fill: #c8601e; } .fuel { fill: #5b68c0; }
  .pin { fill: #fff; filter: drop-shadow(0 1px 1.500px rgba(60, 64, 67, .5)); }
  .maptype { position: absolute; left: 20px; top: 20px; height: 80px; display: flex; align-items: center; background: #fff; border-radius: 4px; box-shadow: 0 2px 6px rgba(0, 0, 0, .25); font: 36px/80px Roboto, sans-serif; color: #565656; }
  .maptype b { width: 139px; box-sizing: border-box; padding-left: 34px; font-weight: 500; color: #000; border-right: 2px solid #eee; }
  .maptype span:not(:global(.t)) { width: 197px; box-sizing: border-box; padding-left: 34px; }
  .control { position: absolute; left: 1136px; width: 80px; height: 80px; background: #fff; border-radius: 4px; box-shadow: 0 2px 6px rgba(0, 0, 0, .25); display: grid; place-items: center; }
  .full { top: 20px; } .pan { top: 628px; border-radius: 50%; } .man { top: 772px; }
  .full svg { width: 36px; height: 36px; }
  .pan svg { width: 48px; height: 48px; }
  .full path, .pan path { fill: none; stroke: #666; stroke-width: 4.500; }
  .man { height: 90px; align-items: start; padding-top: 8px; box-sizing: border-box; }
  .man svg { width: 36px; height: 62px; }
</style>
